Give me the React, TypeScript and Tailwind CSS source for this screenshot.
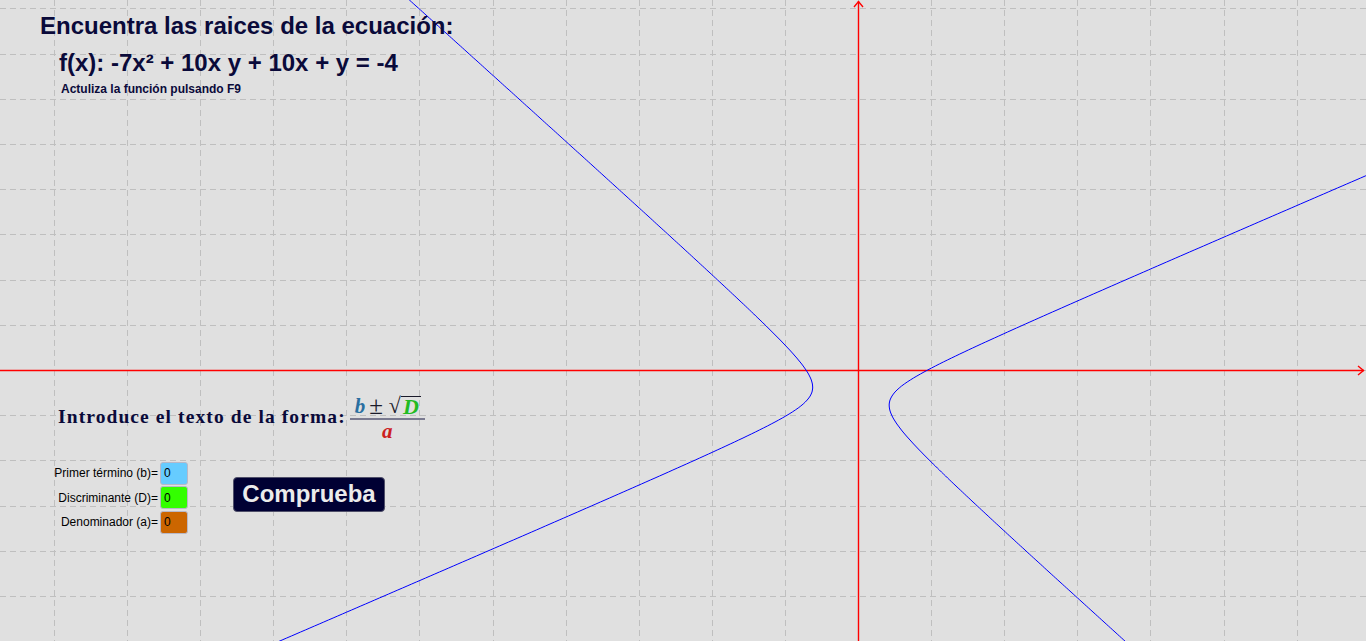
import React from "react";

// Vista gráfica: origen y escala de la cuadrícula (px)
const W = 1366;
const H = 641;
const OX = 858;
const OY = 370;
const DX = 73.1;
const DY = 45.2;

// Cónica ajustada a la gráfica, en unidades u=(x-OX)/100, w=(y-OY)/100
const cB = 1.214, cC = -2.584, cD = -0.177, cE = 1.441, cF = -0.3624;

function ramas() {
  const izq: string[] = [];
  const der: string[] = [];
  for (let y = -6; y <= H + 6; y += 2) {
    const w = (y - OY) / 100;
    const b = cB * w + cD;
    const c = cC * w * w + cE * w + cF;
    const disc = b * b - 4 * c;
    if (disc < 0) continue;
    const s = Math.sqrt(disc);
    const u1 = (-b - s) / 2;
    const u2 = (-b + s) / 2;
    izq.push(`${(OX + u1 * 100).toFixed(1)},${y}`);
    der.push(`${(OX + u2 * 100).toFixed(1)},${y}`);
  }
  return { izq: izq.join(" "), der: der.join(" ") };
}

const curva = ramas();

function Grafica() {
  const vx: number[] = [];
  for (let k = -12; k <= 7; k++) vx.push(OX + k * DX);
  const hy: number[] = [];
  for (let k = -9; k <= 7; k++) hy.push(OY + k * DY);

  return (
    <svg className="absolute inset-0" width={W} height={H} viewBox={`0 0 ${W} ${H}`}>
      {vx.map((x) => (
        <line key={"v" + x} x1={Math.round(x) + 0.5} y1={0} x2={Math.round(x) + 0.5} y2={H} stroke="#bfbfbf" strokeWidth={1} strokeDasharray="6 4" />
      ))}
      {hy.map((y) => (
        <line key={"h" + y} x1={0} y1={Math.round(y) + 0.5} x2={W} y2={Math.round(y) + 0.5} stroke="#bfbfbf" strokeWidth={1} strokeDasharray="6 4" />
      ))}
      {/* ejes */}
      <line x1={0} y1={OY + 0.5} x2={1364} y2={OY + 0.5} stroke="#ff0000" strokeWidth={1.4} />
      <polyline points={`1358,366 1363.5,370.5 1358,375`} fill="none" stroke="#ff0000" strokeWidth={1.4} />
      <line x1={OX + 0.5} y1={H} x2={OX + 0.5} y2={1} stroke="#ff0000" strokeWidth={1.4} />
      <polyline points={`854,7 858.5,1.5 863,7`} fill="none" stroke="#ff0000" strokeWidth={1.4} />
      {/* hipérbola */}
      <polyline points={curva.izq} fill="none" stroke="#0000ff" strokeWidth={1} />
      <polyline points={curva.der} fill="none" stroke="#0000ff" strokeWidth={1} />
    </svg>
  );
}

function Casilla({ label, color }: { label: string; color: string }) {
  return (
    <div className="flex items-center justify-end h-[23px]">
      <span className="text-[12px] leading-[14px] text-black mr-[2px] whitespace-nowrap">{label}</span>
      <div className={`w-[28px] h-[23px] rounded-[3px] border border-[#b8b8c8] ${color} flex items-center pl-[3px] text-[12px] text-black`}>
        0
      </div>
    </div>
  );
}

export default function App() {
  return (
    <div
      className="relative w-full h-[641px] overflow-hidden bg-[#e0e0e0]"
      style={{ fontFamily: '"Liberation Sans", Arial, sans-serif' }}
    >
      <Grafica />

      <div className="relative flex flex-col pt-[12px] text-[#0a0a3a]">
        <h1 className="ml-[40px] text-[24px] leading-[28px] font-bold whitespace-nowrap">
          Encuentra las raices de la ecuación:
        </h1>
        <p className="ml-[59px] mt-[9px] text-[24px] leading-[28px] font-bold whitespace-nowrap">
          f(x): -7x² + 10x y + 10x + y = -4
        </p>
        <p className="ml-[61px] mt-[5px] text-[12px] leading-[14px] font-bold whitespace-nowrap">
          Actuliza la función pulsando F9
        </p>

        <div
          className="ml-[58px] mt-[299px] flex items-center"
          style={{ fontFamily: '"Liberation Serif", "Times New Roman", serif' }}
        >
          <span className="text-[19.5px] leading-[24px] font-bold tracking-[1.1px] mb-[3px] whitespace-nowrap">
            Introduce el texto de la forma:
          </span>
          <div className="ml-[4px] flex flex-col items-center">
            <div className="flex items-end h-[22px] leading-[22px] pl-[1px]">
              <span className="text-[21px] italic font-bold text-[#2a6fa0]">b</span>
              <span className="ml-[4px] mr-[6px] text-[25px] leading-[22px] text-[#1a1a2a]">±</span>
              <span className="text-[22px] text-[#1a1a2a]">√</span>
              <span className="text-[22px] italic font-bold text-[#22bb22] border-t-[1.5px] border-[#1a1a2a] leading-[20px] px-[2px]">D</span>
            </div>
            <div className="w-[75px] h-[1.5px] bg-[#7a7a90] mt-[1px]" />
            <div className="h-[22px] text-[21px] leading-[22px] italic font-bold text-[#cc2020]">a</div>
          </div>
        </div>

        <div className="ml-[40px] mt-[20px] flex items-start">
          <div className="flex flex-col gap-[1.5px] w-[148px]">
            <Casilla label="Primer término (b)=" color="bg-[#66ccff]" />
            <Casilla label="Discriminante (D)=" color="bg-[#33ff00]" />
            <Casilla label="Denominador (a)=" color="bg-[#cc6600]" />
          </div>
          <button className="ml-[45px] mt-[15px] w-[152px] h-[35px] rounded-[4px] bg-[#000033] border border-[#50506a] text-[#ebebeb] text-[24px] leading-[28px] font-bold">
            Comprueba
          </button>
        </div>
      </div>
    </div>
  );
}
